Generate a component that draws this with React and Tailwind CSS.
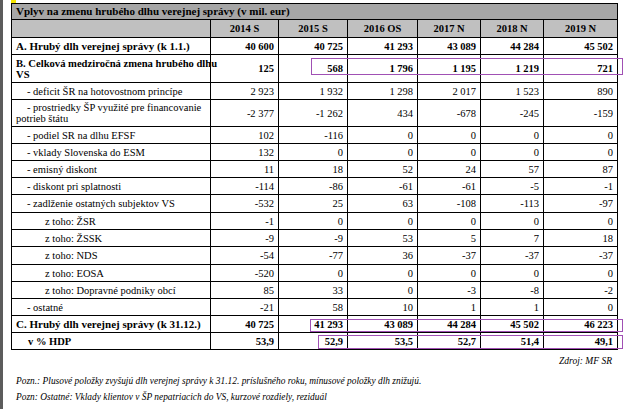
import React from 'react';

const YEARS = ['2014 S', '2015 S', '2016 OS', '2017 N', '2018 N', '2019 N'];

// level: 0 = bold main row, 1 = "- " item, 2 = "z toho:" item, 3 = indented bold
const ROWS = [
  { label: 'A. Hrubý dlh verejnej správy (k 1.1.)', level: 0, h: 'h-[17px]', vals: ['40 600', '40 725', '41 293', '43 089', '44 284', '45 502'] },
  { label: 'B. Celková medziročná zmena hrubého dlhu', label2: 'VS', level: 0, h: 'h-[28px]', vals: ['125', '568', '1 796', '1 195', '1 219', '721'] },
  { label: '- deficit ŠR na hotovostnom princípe', level: 1, h: 'h-[17px]', vals: ['2 923', '1 932', '1 298', '2 017', '1 523', '890'] },
  { label: '- prostriedky ŠP využité pre financovanie potrieb štátu', level: 1, h: 'h-[27px]', vals: ['-2 377', '-1 262', '434', '-678', '-245', '-159'] },
  { label: '- podiel SR na dlhu EFSF', level: 1, h: 'h-[17px]', vals: ['102', '-116', '0', '0', '0', '0'] },
  { label: '- vklady Slovenska do ESM', level: 1, h: 'h-[17px]', vals: ['132', '0', '0', '0', '0', '0'] },
  { label: '- emisný diskont', level: 1, h: 'h-[17px]', vals: ['11', '18', '52', '24', '57', '87'] },
  { label: '- diskont pri splatnosti', level: 1, h: 'h-[17px]', vals: ['-114', '-86', '-61', '-61', '-5', '-1'] },
  { label: '- zadlženie ostatných subjektov VS', level: 1, h: 'h-[18px]', vals: ['-532', '25', '63', '-108', '-113', '-97'] },
  { label: 'z toho: ŽSR', level: 2, h: 'h-[17px]', vals: ['-1', '0', '0', '0', '0', '0'] },
  { label: 'z toho: ŽSSK', level: 2, h: 'h-[17px]', vals: ['-9', '-9', '53', '5', '7', '18'] },
  { label: 'z toho: NDS', level: 2, h: 'h-[18px]', vals: ['-54', '-77', '36', '-37', '-37', '-37'] },
  { label: 'z toho: EOSA', level: 2, h: 'h-[17px]', vals: ['-520', '0', '0', '0', '0', '0'] },
  { label: 'z toho: Dopravné podniky obcí', level: 2, h: 'h-[17px]', vals: ['85', '33', '0', '-3', '-8', '-2'] },
  { label: '- ostatné', level: 1, h: 'h-[17px]', vals: ['-21', '58', '10', '1', '1', '0'] },
  { label: 'C. Hrubý dlh verejnej správy (k 31.12.)', level: 0, h: 'h-[17px]', vals: ['40 725', '41 293', '43 089', '44 284', '45 502', '46 223'] },
  { label: 'v % HDP', level: 3, h: 'h-[17px]', vals: ['53,9', '52,9', '53,5', '52,7', '51,4', '49,1'] },
];

function labelClass(r) {
  if (r.level === 1) return 'indent-[11px]';
  if (r.level === 2) return 'indent-[29px]';
  if (r.level === 3) return 'pl-[16px] font-bold';
  return r.label2 ? 'font-bold text-[10.6px]' : 'font-bold text-[11px]';
}

export default function App() {
  return (
    <div className="relative w-[632px] h-[409px] bg-white overflow-hidden text-black font-['Liberation_Serif','Times_New_Roman',serif]">
      {/* left window edge */}
      <div className="absolute left-0 top-0 w-[3px] h-full bg-[#5c5c5c]" />
      <div className="absolute left-[11px] top-0 w-[5px] h-[3px] bg-[#f5e600]" />

      <div className="pl-[11px] pt-[3px]">
        <table className="table-fixed border-collapse w-[606px] text-[10.5px] leading-[11px]">
          <colgroup>
            <col className="w-[199px]" />
            <col className="w-[68px]" />
            <col className="w-[69px]" />
            <col className="w-[70px]" />
            <col className="w-[63px]" />
            <col className="w-[63px]" />
            <col className="w-[74px]" />
          </colgroup>
          <thead>
            <tr className="h-[16px] bg-[#a6a6a6]">
              <th colSpan={7} className="border border-black text-left font-bold px-[4px] text-[11px]">
                Vplyv na zmenu hrubého dlhu verejnej správy (v mil. eur)
              </th>
            </tr>
            <tr className="h-[18px] bg-[#c0c0c0]">
              <th className="border border-black" />
              {YEARS.map((y) => (
                <th key={y} className="border border-black text-center font-bold">{y}</th>
              ))}
            </tr>
          </thead>
          <tbody>
            {ROWS.map((r) => (
              <tr key={r.label} className={r.h}>
                <td className={`border border-black px-[4px] align-middle ${labelClass(r)}`}>
                  {r.label2 ? (
                    <>
                      <span className="whitespace-nowrap">{r.label}</span>
                      <br />
                      {r.label2}
                    </>
                  ) : r.label}
                </td>
                {r.vals.map((v, i) => (
                  <td key={i} className={`border border-black text-right pr-[4px] align-middle ${r.level === 0 || r.level === 3 ? 'font-bold' : ''}`}>
                    {v}
                  </td>
                ))}
              </tr>
            ))}
          </tbody>
        </table>

        <div className="w-[606px] text-right italic text-[9.5px] pr-[5px] mt-[4px]">Zdroj: MF SR</div>
        <div className="mt-[5px] pl-[5px] italic text-[9.4px] leading-[16px]">
          <p>Pozn.: Plusové položky zvyšujú dlh verejnej správy  k 31.12. príslušného roku, mínusové položky dlh znižujú.</p>
          <p>Pozn: Ostatné: Vklady klientov v ŠP nepatriacich do VS, kurzové rozdiely, reziduál</p>
        </div>
      </div>

      {/* annotation boxes */}
      <div className="absolute left-[311px] top-[58px] w-[312px] h-[17px] border border-[#a050b4]" />
      <div className="absolute left-[310px] top-[319px] w-[313px] h-[13px] border border-[#a050b4]" />
      <div className="absolute left-[318px] top-[335px] w-[305px] h-[14px] border border-[#a050b4]" />
    </div>
  );
}
